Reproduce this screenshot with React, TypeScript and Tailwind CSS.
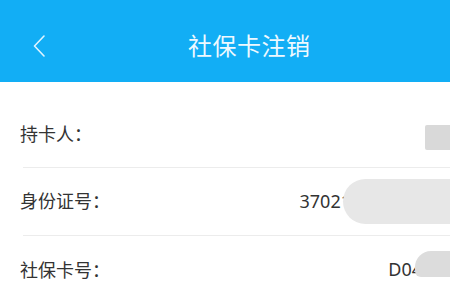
import React from "react";

const font = { fontFamily: '"Noto Sans", "Noto Sans CJK SC", sans-serif' };

export default function App() {
  return (
    <div
      className="w-[450px] h-[300px] overflow-hidden bg-white"
      style={font}
    >
      <div className="h-[82px] bg-[#12aef5] flex items-center pl-[33px] pt-[9px]">
        <svg width="12" height="22" viewBox="0 0 12 22" fill="none">
          <path
            d="M11 1 L1.5 11 L11 21"
            stroke="#dff4ff"
            strokeWidth="1.6"
            strokeLinecap="round"
            strokeLinejoin="round"
          />
        </svg>
        <div className="ml-[143px] text-[24px] leading-none text-[#eef9ff] tracking-[0.5px]">
          社保卡注销
        </div>
      </div>
      <div className="h-[18px] bg-white" />
      <div className="flex flex-col">
        <div className="h-[67px] flex items-center justify-between pl-[20px]">
          <span className="text-[18px] text-[#333] pt-[2px]">持卡人：</span>
          <span className="w-[25px] h-[25px] bg-[#d9d9d9] rounded-l-[2px] mt-[7px]" />
        </div>
        <div className="h-px ml-[23px] bg-[#ececec]" />
        <div className="h-[67px] flex items-center justify-between pl-[20px]">
          <span className="text-[18px] text-[#333]">身份证号：</span>
          <span className="flex items-center">
            <span className="text-[18px] text-[#333]">37021</span>
            <span className="relative -ml-[8px] w-[107px] h-[45px] bg-[#e7e7e7] rounded-l-full" />
          </span>
        </div>
        <div className="h-px ml-[23px] bg-[#ececec]" />
        <div className="h-[67px] flex items-center justify-between pl-[20px]">
          <span className="text-[18px] text-[#333] pt-[2px]">社保卡号：</span>
          <span className="flex items-center">
            <span className="text-[18px] text-[#333]">D04</span>
            <span className="relative -ml-[7px] w-[35px] h-[26px] bg-[#dcdcdc] rounded-tl-[16px] rounded-bl-[6px] mb-[12px]" />
          </span>
        </div>
        <div className="h-px ml-[23px] bg-[#ececec]" />
      </div>
    </div>
  );
}
